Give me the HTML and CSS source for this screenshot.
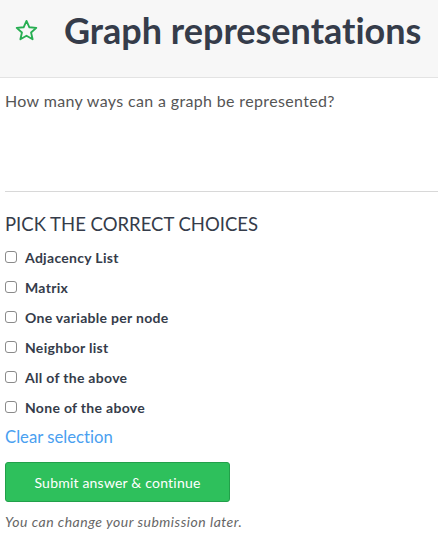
FILE: index.html
```html
<!DOCTYPE html>
<html>
<head>
<meta charset="utf-8">
<link rel="stylesheet" href="styles.css">
</head>
<body>
<header class="header">
  <svg class="star" viewBox="0 0 24 24" width="24" height="24"><path d="M12 2.8l2.75 6.1 6.65.62-5.02 4.42 1.48 6.52L12 17.05 6.14 20.46l1.48-6.52L2.6 9.52l6.65-.62z" fill="none" stroke="#27ae52" stroke-width="1.8" stroke-linejoin="round"/></svg>
  <h1 class="title">Graph representations</h1>
</header>
<main class="content">
  <p class="question">How many ways can a graph be represented?</p>
  <hr class="divider">
  <h2 class="pick">PICK THE CORRECT CHOICES</h2>
  <ul class="choices">
    <li class="choice"><span class="box"></span><span class="label">Adjacency List</span></li>
    <li class="choice"><span class="box"></span><span class="label">Matrix</span></li>
    <li class="choice"><span class="box"></span><span class="label">One variable per node</span></li>
    <li class="choice"><span class="box"></span><span class="label">Neighbor list</span></li>
    <li class="choice"><span class="box"></span><span class="label">All of the above</span></li>
    <li class="choice"><span class="box"></span><span class="label">None of the above</span></li>
  </ul>
  <a class="clear">Clear selection</a>
  <button class="submit">Submit answer &amp; continue</button>
  <p class="note">You can change your submission later.</p>
</main>
</body>
</html>
```
FILE: styles.css
```css
html, body {
  margin: 0;
  padding: 0;
  background: #fff;
  font-family: Lato, "Open Sans", sans-serif;
  font-variant-ligatures: none;
  color: #353c4a;
}
.header {
  height: 78px;
  background: #f7f7f7;
  border-bottom: 1px solid #e3e3e3;
  display: flex;
  align-items: flex-start;
  padding: 0 0 0 14px;
  box-sizing: border-box;
}
.star {
  width: 25px;
  height: 25px;
  margin-top: 18px;
  flex: none;
}
.title {
  margin: 8px 0 0 25px;
  font-size: 36px;
  font-weight: 700;
  letter-spacing: 0;
  white-space: nowrap;
  color: #353c4a;
  font-variant-ligatures: none;
}
.content {
  padding: 0 0 0 5px;
}
.question {
  margin: 13px 0 0;
  font-size: 16px;
  letter-spacing: 0.35px;
  color: #555;
  line-height: 20px;
}
.divider {
  margin: 80px 0 0;
  border: 0;
  border-top: 1px solid #d8d8d8;
  height: 0;
}
.pick {
  margin: 20px 0 0;
  font-size: 18.5px;
  font-weight: 400;
  color: #353c4a;
  line-height: 24px;
}
.choices {
  list-style: none;
  margin: 6px 0 0;
  padding: 0;
}
.choice {
  display: flex;
  align-items: center;
  height: 30px;
}
.box {
  width: 12px;
  height: 12px;
  border: 1px solid #8a8a8a;
  border-radius: 3px;
  box-sizing: border-box;
  margin: 0 8px 0 0;
  flex: none;
}
.label {
  font-size: 14px;
  font-weight: 700;
  letter-spacing: 0.3px;
  color: #353c4a;
}
.clear {
  display: block;
  margin-top: 4px;
  font-size: 16.7px;
  color: #4aa0f0;
  line-height: 22px;
}
.submit {
  display: block;
  margin-top: 14px;
  width: 225px;
  height: 40px;
  background: #2ec05c;
  border: 1px solid #22a04a;
  border-radius: 3px;
  color: #fff;
  font-family: Lato, sans-serif;
  font-size: 14px;
  letter-spacing: 0.2px;
  padding: 0;
}
.note {
  margin: 11px 0 0;
  font-size: 14px;
  letter-spacing: 0.5px;
  font-style: italic;
  color: #666;
}
```
